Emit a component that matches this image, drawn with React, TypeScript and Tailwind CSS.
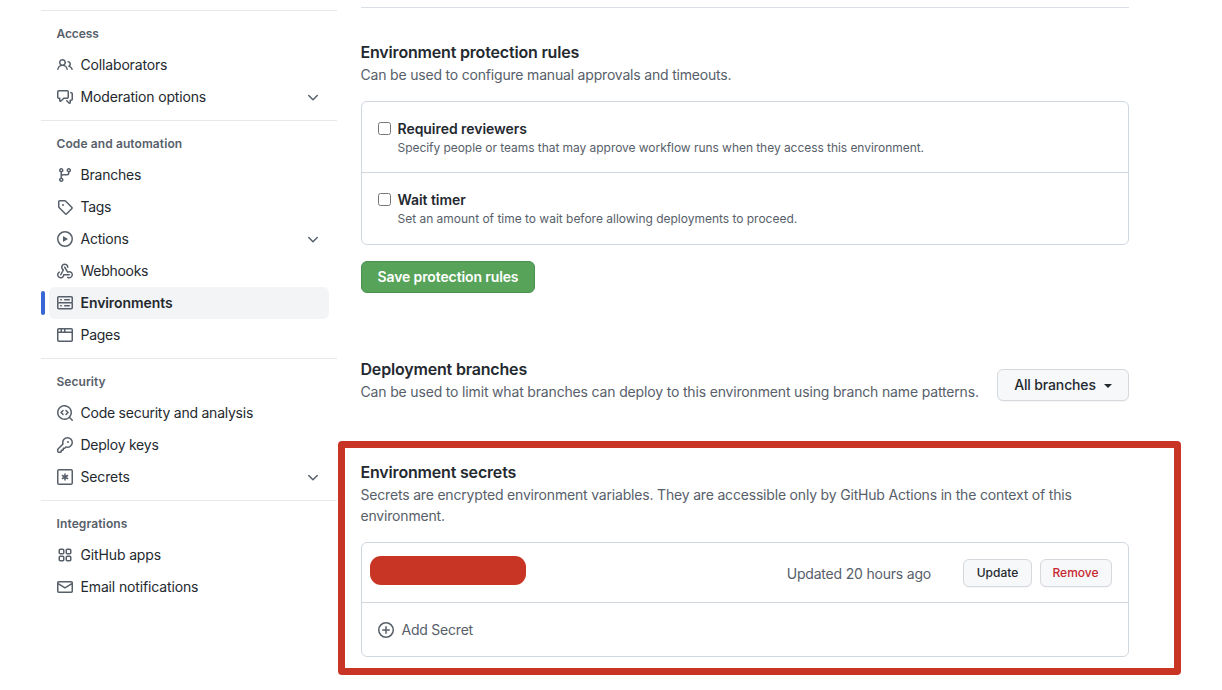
import React from "react";

const icons = {
  people: (
    <path d="M2 5.5a3.5 3.5 0 1 1 5.898 2.549 5.508 5.508 0 0 1 3.034 4.084.75.75 0 1 1-1.482.235 4 4 0 0 0-7.9 0 .75.75 0 0 1-1.482-.236A5.507 5.507 0 0 1 3.102 8.05 3.493 3.493 0 0 1 2 5.5ZM11 4a3.001 3.001 0 0 1 2.22 5.018 5.01 5.01 0 0 1 2.56 3.012.749.749 0 0 1-.885.954.752.752 0 0 1-.549-.514 3.507 3.507 0 0 0-2.522-2.372.75.75 0 0 1-.574-.73v-.352a.75.75 0 0 1 .416-.672A1.5 1.5 0 0 0 11 5.5.75.75 0 0 1 11 4Zm-5.5-.5a2 2 0 1 0-.001 3.999A2 2 0 0 0 5.5 3.5Z" />
  ),
  discussion: (
    <path d="M1.75 1h8.5c.966 0 1.75.784 1.75 1.75v5.5A1.75 1.75 0 0 1 10.25 10H7.061l-2.574 2.573A1.458 1.458 0 0 1 2 11.543V10h-.25A1.75 1.75 0 0 1 0 8.25v-5.5C0 1.784.784 1 1.75 1ZM1.5 2.75v5.5c0 .138.112.25.25.25h1a.75.75 0 0 1 .75.75v2.19l2.72-2.72a.749.749 0 0 1 .53-.22h3.5a.25.25 0 0 0 .25-.25v-5.5a.25.25 0 0 0-.25-.25h-8.5a.25.25 0 0 0-.25.25Zm13 2a.25.25 0 0 0-.25-.25h-.5a.75.75 0 0 1 0-1.5h.5c.966 0 1.75.784 1.75 1.75v5.5A1.75 1.75 0 0 1 14.25 12H14v1.543a1.458 1.458 0 0 1-2.487 1.03L9.22 12.28a.749.749 0 0 1 .326-1.275.749.749 0 0 1 .734.215l2.22 2.22v-2.19a.75.75 0 0 1 .75-.75h1a.25.25 0 0 0 .25-.25Z" />
  ),
  branch: (
    <path d="M9.5 3.25a2.25 2.25 0 1 1 3 2.122V6A2.5 2.5 0 0 1 10 8.5H6a1 1 0 0 0-1 1v1.128a2.251 2.251 0 1 1-1.5 0V5.372a2.25 2.25 0 1 1 1.5 0v1.836A2.493 2.493 0 0 1 6 7h4a1 1 0 0 0 1-1v-.628A2.25 2.25 0 0 1 9.5 3.25Zm-6 0a.75.75 0 1 0 1.5 0 .75.75 0 0 0-1.5 0Zm8.25-.75a.75.75 0 1 0 0 1.5.75.75 0 0 0 0-1.5ZM4.25 12a.75.75 0 1 0 0 1.5.75.75 0 0 0 0-1.5Z" />
  ),
  tag: (
    <path d="M1 7.775V2.75C1 1.784 1.784 1 2.75 1h5.025c.464 0 .91.184 1.238.513l6.25 6.25a1.75 1.75 0 0 1 0 2.474l-5.026 5.026a1.75 1.75 0 0 1-2.474 0l-6.25-6.25A1.752 1.752 0 0 1 1 7.775Zm1.5 0c0 .066.026.13.073.177l6.25 6.25a.25.25 0 0 0 .354 0l5.025-5.025a.25.25 0 0 0 0-.354l-6.25-6.25a.25.25 0 0 0-.177-.073H2.75a.25.25 0 0 0-.25.25ZM6 5a1 1 0 1 1 0 2 1 1 0 0 1 0-2Z" />
  ),
  play: (
    <path d="M8 0a8 8 0 1 1 0 16A8 8 0 0 1 8 0ZM1.5 8a6.5 6.5 0 1 0 13 0 6.5 6.5 0 0 0-13 0Zm4.879-2.773 4.264 2.559a.25.25 0 0 1 0 .428l-4.264 2.559A.25.25 0 0 1 6 10.559V5.442a.25.25 0 0 1 .379-.215Z" />
  ),
  webhook: (
    <path d="M5.5 4.25a2.25 2.25 0 0 1 4.5 0 .75.75 0 0 0 1.5 0 3.75 3.75 0 1 0-6.14 2.889l-2.272 4.258a.75.75 0 0 0 1.324.706L7 7.25a.75.75 0 0 0-.309-1.015A2.25 2.25 0 0 1 5.5 4.25ZM7.364 3.607a.75.75 0 0 1 1.03.257l2.608 4.349a3.75 3.75 0 1 1-.628 6.785.75.75 0 0 1 .752-1.299 2.25 2.25 0 1 0-.033-3.88.75.75 0 0 1-1.03-.256L7.107 4.636a.75.75 0 0 1 .257-1.03ZM2.9 8.776A.75.75 0 0 1 2.625 9.8 2.25 2.25 0 1 0 6 11.75a.75.75 0 0 1 .75-.751h5.5a.75.75 0 0 1 0 1.5H7.425a3.751 3.751 0 1 1-5.55-3.998.75.75 0 0 1 1.024.274Z" />
  ),
  server: (
    <path d="M1.75 1h12.5c.966 0 1.75.784 1.75 1.75v4c0 .372-.116.717-.314 1 .198.283.314.628.314 1v4a1.75 1.75 0 0 1-1.75 1.75H1.75A1.75 1.75 0 0 1 0 12.75v-4c0-.358.109-.707.314-1a1.739 1.739 0 0 1-.314-1v-4C0 1.784.784 1 1.75 1ZM1.5 2.75v4c0 .138.112.25.25.25h12.5a.25.25 0 0 0 .25-.25v-4a.25.25 0 0 0-.25-.25H1.75a.25.25 0 0 0-.25.25Zm.25 5.75a.25.25 0 0 0-.25.25v4c0 .138.112.25.25.25h12.5a.25.25 0 0 0 .25-.25v-4a.25.25 0 0 0-.25-.25ZM7 4.75A.75.75 0 0 1 7.75 4h4.5a.75.75 0 0 1 0 1.5h-4.5A.75.75 0 0 1 7 4.75ZM7.75 10h4.5a.75.75 0 0 1 0 1.5h-4.5a.75.75 0 0 1 0-1.5ZM3 4.75A.75.75 0 0 1 3.75 4h.5a.75.75 0 0 1 0 1.5h-.5A.75.75 0 0 1 3 4.75ZM3.75 10h.5a.75.75 0 0 1 0 1.5h-.5a.75.75 0 0 1 0-1.5Z" />
  ),
  browser: (
    <path d="M0 2.75C0 1.784.784 1 1.75 1h12.5c.966 0 1.75.784 1.75 1.75v10.5A1.75 1.75 0 0 1 14.25 15H1.75A1.75 1.75 0 0 1 0 13.25ZM14.5 6h-13v7.25c0 .138.112.25.25.25h12.5a.25.25 0 0 0 .25-.25Zm-6-3.5v2h6V2.75a.25.25 0 0 0-.25-.25ZM5 2.5v2h2v-2Zm-3.25 0a.25.25 0 0 0-.25.25V4.5h2v-2Z" />
  ),
  codescan: (
    <path d="M8.47 4.97a.75.75 0 0 0 0 1.06L9.94 7.5 8.47 8.97a.75.75 0 1 0 1.06 1.06l2-2a.75.75 0 0 0 0-1.06l-2-2a.75.75 0 0 0-1.06 0ZM6.53 6.03a.75.75 0 0 0-1.06-1.06l-2 2a.75.75 0 0 0 0 1.06l2 2a.75.75 0 1 0 1.06-1.06L5.06 7.5l1.47-1.47ZM12.246 13.307a7.501 7.501 0 1 1 1.06-1.06l2.474 2.473a.749.749 0 1 1-1.06 1.06ZM1.5 7.5a6.002 6.002 0 0 0 3.608 5.504 6.002 6.002 0 0 0 6.486-1.117.748.748 0 0 1 .292-.293A6 6 0 1 0 1.5 7.5Z" />
  ),
  key: (
    <path d="M10.5 0a5.499 5.499 0 1 1-1.288 10.848l-.932.932a.749.749 0 0 1-.53.22H7v.75a.749.749 0 0 1-.22.53l-.5.5a.749.749 0 0 1-.53.22H5v.75a.749.749 0 0 1-.22.53l-.5.5a.749.749 0 0 1-.53.22h-2A1.75 1.75 0 0 1 0 14.25v-2c0-.199.079-.389.22-.53l4.932-4.932A5.5 5.5 0 0 1 10.5 0Zm-4 5.5c-.001.431.069.86.205 1.269a.75.75 0 0 1-.181.768L1.5 12.56v1.69c0 .138.112.25.25.25h1.69l.06-.06v-1.19a.75.75 0 0 1 .75-.75h1.19l.06-.06v-1.19a.75.75 0 0 1 .75-.75h1.19l1.023-1.025a.75.75 0 0 1 .768-.18A4 4 0 1 0 6.5 5.5ZM11 6a1 1 0 1 1 0-2 1 1 0 0 1 0 2Z" />
  ),
  asterisk: (
    <g fill="none" stroke="currentColor" strokeWidth="1.5" strokeLinecap="round">
      <rect x="0.75" y="0.75" width="14.5" height="14.5" rx="1.25" />
      <path d="M8 5v6M5.4 6.5l5.2 3M10.6 6.5l-5.2 3" />
    </g>
  ),
  apps: (
    <g fill="none" stroke="currentColor" strokeWidth="1.5">
      <rect x="2.25" y="2.25" width="4.5" height="4.5" rx="1" />
      <rect x="9.25" y="2.25" width="4.5" height="4.5" rx="1" />
      <rect x="2.25" y="9.25" width="4.5" height="4.5" rx="1" />
      <rect x="9.25" y="9.25" width="4.5" height="4.5" rx="1" />
    </g>
  ),
  mail: (
    <path d="M1.75 2h12.5c.966 0 1.75.784 1.75 1.75v8.5A1.75 1.75 0 0 1 14.25 14H1.75A1.75 1.75 0 0 1 0 12.25v-8.5C0 2.784.784 2 1.75 2ZM1.5 12.251c0 .138.112.25.25.25h12.5a.25.25 0 0 0 .25-.25V5.809L8.38 9.397a.75.75 0 0 1-.76 0L1.5 5.809v6.442Zm13-8.181v-.32a.25.25 0 0 0-.25-.25H1.75a.25.25 0 0 0-.25.25v.32L8 7.88Z" />
  ),
  chevron: (
    <path d="M12.78 6.02a.749.749 0 0 1 0 1.06l-4.25 4.25a.749.749 0 0 1-1.06 0L3.22 7.08a.749.749 0 1 1 1.06-1.06L8 9.739l3.72-3.719a.749.749 0 0 1 1.06 0Z" />
  ),
  plus: (
    <g fill="none" stroke="currentColor" strokeWidth="1.5" strokeLinecap="round">
      <circle cx="8" cy="8" r="7.25" />
      <path d="M8 4.75v6.5M4.75 8h6.5" />
    </g>
  ),
};

type IconName = keyof typeof icons;

function Icon({ name }: { name: IconName }) {
  return (
    <svg viewBox="0 0 16 16" className="size-4 shrink-0 text-[#57606a]" fill="currentColor" aria-hidden="true">
      {icons[name]}
    </svg>
  );
}

type Item = { icon: IconName; label: string; track: string; more?: boolean; active?: boolean };

const sections: { title: string; track: string; items: Item[] }[] = [
  {
    title: "Access",
    track: "tracking-[-0.1px]",
    items: [
      { icon: "people", label: "Collaborators", track: "tracking-[-0.16px]" },
      { icon: "discussion", label: "Moderation options", track: "tracking-[-0.16px]", more: true },
    ],
  },
  {
    title: "Code and automation",
    track: "tracking-[0.1px]",
    items: [
      { icon: "branch", label: "Branches", track: "tracking-[-0.22px]" },
      { icon: "tag", label: "Tags", track: "tracking-[-0.3px]" },
      { icon: "play", label: "Actions", track: "tracking-[-0.22px]", more: true },
      { icon: "webhook", label: "Webhooks", track: "tracking-[-0.28px]" },
      { icon: "server", label: "Environments", track: "tracking-[-0.08px]", active: true },
      { icon: "browser", label: "Pages", track: "tracking-[-0.28px]" },
    ],
  },
  {
    title: "Security",
    track: "tracking-[0.04px]",
    items: [
      { icon: "codescan", label: "Code security and analysis", track: "tracking-[-0.24px]" },
      { icon: "key", label: "Deploy keys", track: "tracking-[-0.24px]" },
      { icon: "asterisk", label: "Secrets", track: "tracking-[-0.14px]", more: true },
    ],
  },
  {
    title: "Integrations",
    track: "tracking-[0.12px]",
    items: [
      { icon: "apps", label: "GitHub apps", track: "tracking-[-0.14px]" },
      { icon: "mail", label: "Email notifications", track: "tracking-[-0.14px]" },
    ],
  },
];

function Sidebar() {
  return (
    <nav className="w-[296px] shrink-0 pt-[10px]">
      {sections.map((s) => (
        <section key={s.title} className="border-t border-[#e6e8eb] pb-[7px]">
          <h3 className={`h-[38px] pt-[14px] pl-[15.5px] text-xs leading-[18px] font-semibold text-[#57606a] ${s.track}`}>
            {s.title}
          </h3>
          <ul>
            {s.items.map((i) => (
              <li key={i.label} className="flex h-8 items-center">
                <span className={`h-6 w-1 rounded-sm ${i.active ? "bg-[#3a67d6]" : ""}`} />
                <a
                  className={`ml-1 flex h-8 w-[280px] items-center gap-[7.5px] rounded-md pr-2 pl-2 text-sm text-[#24292f] ${
                    i.active ? "bg-[#f3f4f6] font-semibold" : ""
                  }`}
                >
                  <Icon name={i.icon} />
                  <span className={`grow ${i.track}`}>{i.label}</span>
                  {i.more && <Icon name="chevron" />}
                </a>
              </li>
            ))}
          </ul>
        </section>
      ))}
    </nav>
  );
}

function Rule({ title, text, track }: { title: string; text: string; track: string }) {
  return (
    <div className="flex h-[70px] gap-[6.5px] border-[#d0d7de] pt-[17px] pl-4 last:h-[72px] last:border-t">
      <span className="mt-[3px] size-[13px] shrink-0 rounded-[2.5px] border border-[#767676] bg-white" />
      <div>
        <div className="text-sm leading-[20px] font-semibold tracking-[-0.05px] text-[#24292f]">{title}</div>
        <div className={`text-xs leading-[18px] text-[#57606a] ${track}`}>{text}</div>
      </div>
    </div>
  );
}

function Heading({ title, track, children }: { title: string; track: string; children: React.ReactNode }) {
  return (
    <div className="-ml-[0.5px]">
      <h2 className="text-base leading-6 font-semibold tracking-[-0.18px] text-[#24292f]">{title}</h2>
      <p className={`text-sm leading-[21px] text-[#57606a] ${track}`}>{children}</p>
    </div>
  );
}

export default function App() {
  return (
    <div className="relative flex h-[690px] w-[1222px] overflow-hidden bg-white pl-[41px] font-['Inter',sans-serif]">
      <Sidebar />
      <main className="ml-6 w-[768px] pt-[7px]">
        <div className="border-t border-[#d8dee4] pt-8">
          <Heading title="Environment protection rules" track="tracking-[-0.19px]">
            Can be used to configure manual approvals and timeouts.
          </Heading>
        </div>
        <div className="mt-4 h-36 rounded-md border border-[#d0d7de]">
          <Rule
            title="Required reviewers"
            text="Specify people or teams that may approve workflow runs when they access this environment."
            track="tracking-[-0.05px]"
          />
          <Rule
            title="Wait timer"
            text="Set an amount of time to wait before allowing deployments to proceed."
            track="tracking-[-0.015px]"
          />
        </div>
        <button className="mt-4 flex h-8 w-[174px] items-center justify-center rounded-md border border-[#4a9150] bg-[#57a359] text-sm font-semibold tracking-[-0.12px] text-white">
          Save protection rules
        </button>

        <div className="mt-16 flex items-start justify-between">
          <Heading title="Deployment branches" track="tracking-[-0.165px]">
            Can be used to limit what branches can deploy to this environment using branch name patterns.
          </Heading>
          <button className="mt-3 flex h-8 w-[132px] shrink-0 items-center justify-center gap-2 rounded-md border border-[#d5d8dc] bg-[#f6f8fa] text-sm font-medium tracking-[-0.14px] text-[#24292f] shadow-[0_1px_0_rgba(27,31,36,0.04)]">
            All branches
            <span className="mt-px border-x-4 border-t-4 border-x-transparent border-t-[#24292f]" />
          </button>
        </div>

        <div className="mt-[58px]">
          <Heading title="Environment secrets" track="tracking-[-0.185px]">
            Secrets are encrypted environment variables. They are accessible only by GitHub Actions in the context of this
            <br />
            environment.
          </Heading>
        </div>
        <div className="mt-4 rounded-md border border-[#d0d7de]">
          <div className="flex h-[59px] items-center pr-4 pl-2">
            <span className="mb-[5px] h-[29px] w-[156px] rounded-[11px] bg-[#c93524]" />
            <span className="mt-0.5 ml-auto text-sm tracking-[-0.2px] text-[#57606a]">Updated 20 hours ago</span>
            <button className="ml-8 h-7 w-[69px] rounded-md border border-[#d5d8dc] bg-[#f6f8fa] text-xs font-medium text-[#24292f] shadow-[0_1px_0_rgba(27,31,36,0.04)]">
              Update
            </button>
            <button className="ml-2 h-7 w-[72px] rounded-md border border-[#d5d8dc] bg-[#f6f8fa] pr-px text-xs font-medium text-[#c8272f] shadow-[0_1px_0_rgba(27,31,36,0.04)]">
              Remove
            </button>
          </div>
          <div className="flex h-[54px] items-center gap-[7.5px] border-t border-[#d0d7de] pl-4 text-sm tracking-[-0.22px] text-[#57606a]">
            <Icon name="plus" />
            Add Secret
          </div>
        </div>
      </main>
      <div className="pointer-events-none absolute top-[441px] left-[338px] h-[234px] w-[843px] rounded-[4px] border-[7px] border-[#c93524]" />
    </div>
  );
}
